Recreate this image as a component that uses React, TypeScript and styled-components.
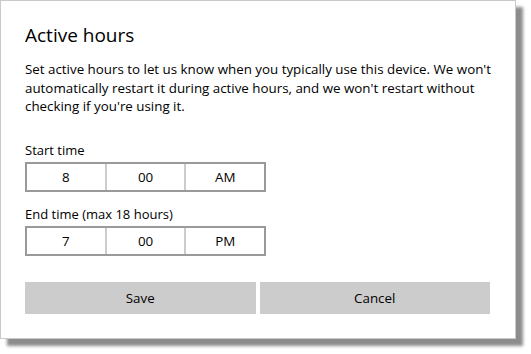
import React from "react";
import styled, { createGlobalStyle } from "styled-components";

const GlobalStyle = createGlobalStyle`
    html, body {
        margin: 0;
        padding: 0;
        background: #ffffff;
    }
    body {
        font-family: "Open Sans", "Noto Sans", sans-serif;
        color: #000000;
    }
`;

const Page = styled.div`
    width: 531px;
    height: 354px;
    background: #ffffff;
`;

const Dialog = styled.div`
    box-sizing: border-box;
    width: 516px;
    height: 339px;
    padding: 0 24px;
    background: #ffffff;
    border: 1px solid #c9c9c9;
    box-shadow: 7px 7px 3px rgba(0, 0, 0, 0.45);
    display: flex;
    flex-direction: column;
`;

const Title = styled.h1`
    margin: 20px 0 0 0;
    font-size: 19px;
    font-weight: 400;
    line-height: 28px;
`;

const Intro = styled.p`
    margin: 11px 0 0 0;
    font-size: 13.35px;
    line-height: 18.5px;
    white-space: nowrap;
`;

const Field = styled.div`
    display: flex;
    flex-direction: column;
    margin-top: ${props => props.$gap}px;
`;

const Label = styled.div`
    font-size: 13px;
    line-height: 18px;
    margin-bottom: 3px;
`;

const Picker = styled.div`
    display: flex;
    width: 241px;
    height: 30px;
    box-sizing: border-box;
    border: 2px solid #999999;
`;

const Segment = styled.div`
    flex: 1;
    display: flex;
    align-items: center;
    justify-content: center;
    font-size: 13.35px;
    border-left: ${props => (props.$first ? "none" : "2px solid #cccccc")};
`;

const Actions = styled.div`
    display: flex;
    gap: 4px;
    margin-top: 26px;
    width: 465px;
`;

const Button = styled.button`
    flex: 1;
    height: 32px;
    border: none;
    background: #cccccc;
    font-family: inherit;
    font-size: 13.35px;
    color: #000000;
    padding: 0;
`;

const TimePicker = ({ values }) => (
    <Picker>
        {values.map((value, i) => (
            <Segment key={i} $first={i === 0}>
                {value}
            </Segment>
        ))}
    </Picker>
);

const App = () => {
    return (
        <Page>
            <GlobalStyle />
            <Dialog>
                <Title>Active hours</Title>
                <Intro>
                    Set active hours to let us know when you typically use this device. We won't
                    <br />
                    automatically restart it during active hours, and we won't restart without
                    <br />
                    checking if you're using it.
                </Intro>
                <Field $gap={25}>
                    <Label>Start time</Label>
                    <TimePicker values={["8", "00", "AM"]} />
                </Field>
                <Field $gap={13}>
                    <Label>End time (max 18 hours)</Label>
                    <TimePicker values={["7", "00", "PM"]} />
                </Field>
                <Actions>
                    <Button>Save</Button>
                    <Button>Cancel</Button>
                </Actions>
            </Dialog>
        </Page>
    );
};

export default App;
